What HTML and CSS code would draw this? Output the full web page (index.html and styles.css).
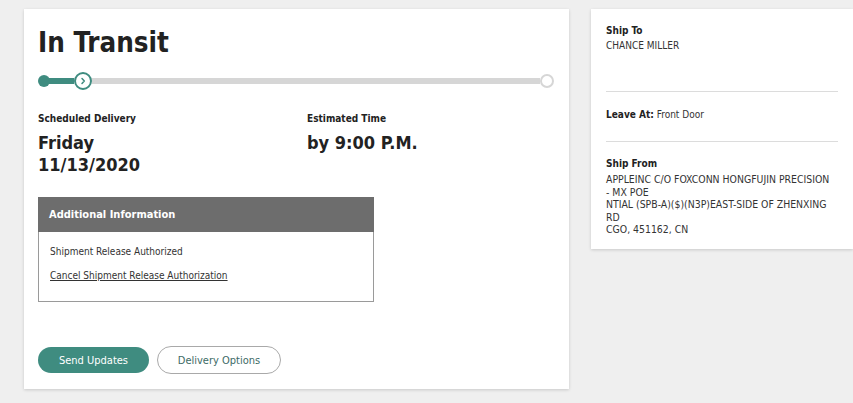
FILE: index.html
```html
<!DOCTYPE html>
<html>
<head>
<meta charset="utf-8">
<link rel="stylesheet" href="styles.css">
</head>
<body>
<div class="page">
  <section class="card main">
    <h1 class="title">In Transit</h1>
    <div class="progress">
      <span class="dot"></span>
      <span class="bar done"></span>
      <span class="step">
        <svg width="10" height="10" viewBox="0 0 10 10"><path d="M4 2.5 L6.3 5 L4 7.5" fill="none" stroke="#3f8c80" stroke-width="1.5" stroke-linecap="round" stroke-linejoin="round"/></svg>
      </span>
      <span class="bar todo"></span>
      <span class="end"></span>
    </div>
    <div class="times">
      <div class="col">
        <div class="label">Scheduled Delivery</div>
        <div class="big">Friday<br>11/13/2020</div>
      </div>
      <div class="col">
        <div class="label">Estimated Time</div>
        <div class="big">by 9:00 P.M.</div>
      </div>
    </div>
    <div class="info">
      <div class="info-head">Additional Information</div>
      <div class="info-body">
        <div class="line">Shipment Release Authorized</div>
        <div class="line"><a class="link" href="#">Cancel Shipment Release Authorization</a></div>
      </div>
    </div>
    <div class="actions">
      <button class="btn primary">Send Updates</button>
      <button class="btn outline">Delivery Options</button>
    </div>
  </section>
  <aside class="card side">
    <div class="sec first">
      <div class="slabel">Ship To</div>
      <div class="sval">CHANCE MILLER</div>
    </div>
    <div class="sec second">
      <div class="sval"><b class="slabel">Leave At:</b> Front Door</div>
    </div>
    <div class="sec third">
      <div class="slabel">Ship From</div>
      <div class="addr">
        <div>APPLEINC C/O FOXCONN HONGFUJIN PRECISION</div>
        <div>- MX POE</div>
        <div>NTIAL (SPB-A)($)(N3P)EAST-SIDE OF ZHENXING</div>
        <div>RD</div>
        <div>CGO, 451162, CN</div>
      </div>
    </div>
  </aside>
</div>
</body>
</html>
```

FILE: styles.css
```css
html, body {
  margin: 0;
  padding: 0;
  background: #efefef;
}
body {
  font-family: "DejaVu Sans Condensed", "DejaVu Sans", sans-serif;
  font-stretch: condensed;
  color: #333;
  width: 853px;
  height: 403px;
  overflow: hidden;
}
.page {
  display: flex;
  align-items: flex-start;
  gap: 22px;
  padding: 9px 0 0 24px;
}
.card {
  background: #fff;
  box-shadow: 0 1px 3px rgba(0,0,0,0.16);
  box-sizing: border-box;
}
.main {
  width: 545px;
  height: 380px;
  padding: 17px 14px 15px 14px;
  display: flex;
  flex-direction: column;
}
.title {
  margin: 0;
  font-size: 27.5px;
  line-height: 32px;
  font-weight: bold;
  color: #222;
}
.progress {
  margin-top: 13px;
  height: 20px;
  width: 516px;
  display: flex;
  align-items: center;
}
.dot {
  width: 12px;
  height: 12px;
  border-radius: 50%;
  background: #3f8c80;
  flex: none;
}
.bar {
  height: 6px;
}
.bar.done {
  width: 25px;
  margin-left: -1px;
  background: #3f8c80;
}
.step {
  flex: none;
  width: 18px;
  height: 18px;
  box-sizing: border-box;
  border: 2px solid #3f8c80;
  border-radius: 50%;
  background: #fff;
  display: flex;
  align-items: center;
  justify-content: center;
}
.step svg { display: block; }
.bar.todo {
  flex: 1;
  background: #d6d6d6;
}
.end {
  flex: none;
  width: 14px;
  height: 14px;
  box-sizing: border-box;
  border: 2px solid #d6d6d6;
  border-radius: 50%;
  background: #fff;
}
.times {
  margin-top: 22px;
  display: flex;
}
.col:first-child { width: 269px; }
.label {
  font-size: 10px;
  line-height: 12px;
  font-weight: bold;
  color: #222;
}
.big {
  margin-top: 7px;
  font-size: 18px;
  line-height: 22px;
  font-weight: bold;
  color: #222;
}
.info {
  margin-top: 21px;
  width: 336px;
  box-sizing: border-box;
  border: 1px solid #9a9a9a;
}
.info-head {
  background: #6d6d6d;
  color: #fff;
  font-weight: bold;
  font-size: 11px;
  height: 35px;
  line-height: 36px;
  padding-left: 11px;
  margin: -1px -1px 0 -1px;
}
.info-body {
  padding: 13px 11px 18px;
  font-size: 10px;
  line-height: 14px;
}
.info-body .line + .line { margin-top: 10px; }
.link {
  color: #333;
  text-decoration: underline;
}
.actions {
  margin-top: auto;
  display: flex;
  align-items: center;
  gap: 8px;
}
.btn {
  font-family: "DejaVu Sans Condensed", "DejaVu Sans", sans-serif;
  font-stretch: condensed;
  font-size: 11px;
  box-sizing: border-box;
  cursor: pointer;
}
.btn.primary {
  width: 111px;
  height: 26px;
  border-radius: 13px;
  border: none;
  background: #3f8c80;
  color: #fff;
}
.btn.outline {
  width: 124px;
  height: 28px;
  border-radius: 14px;
  border: 1px solid #a9a9a9;
  background: #fff;
  color: #3d6b66;
}
.side {
  width: 262px;
  height: 240px;
  padding: 14px 15px 0 15px;
}
.slabel {
  font-size: 10px;
  font-weight: bold;
  color: #222;
  line-height: 15px;
}
.sval {
  font-size: 10px;
  line-height: 15px;
  color: #333;
}
.sec.first {
  height: 68px;
  border-bottom: 1px solid #dcdcdc;
}
.sec.second {
  padding-top: 15px;
  height: 34px;
  border-bottom: 1px solid #dcdcdc;
}
.sec.third {
  padding-top: 14px;
}
.addr {
  margin-top: 2px;
  font-size: 10.4px;
  line-height: 12.5px;
  color: #333;
  white-space: nowrap;
}
```
